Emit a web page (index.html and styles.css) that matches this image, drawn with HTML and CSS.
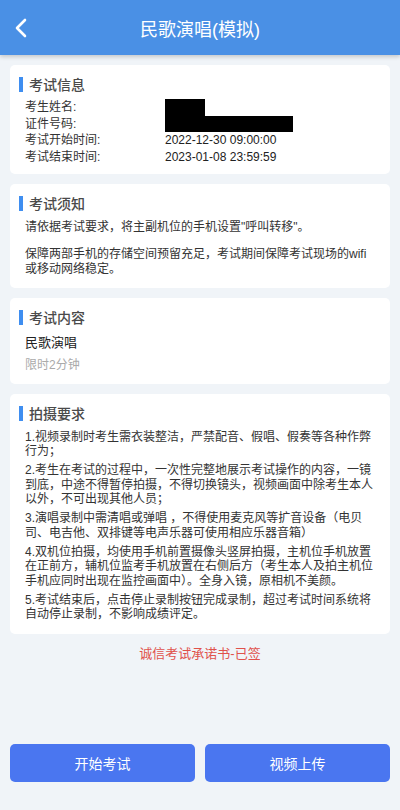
FILE: index.html
```html
<!DOCTYPE html>
<html lang="zh-CN">
<head>
    <meta charset="UTF-8">
    <meta name="viewport" content="width=device-width, initial-scale=1.0">
    <title>民歌演唱(模拟)</title>
    <link rel="stylesheet" href="styles.css">
</head>
<body>
    <header class="topbar">
        <a class="back" href="#">
            <svg width="14" height="20" viewBox="0 0 14 20">
                <path d="M11 2 L3 10 L11 18" fill="none" stroke="#fff" stroke-width="2.6" stroke-linecap="round" stroke-linejoin="round"/>
            </svg>
        </a>
        <h1>民歌演唱(模拟)</h1>
        <span></span>
    </header>

    <main class="content">
        <section class="card">
            <h2 class="card-title">考试信息</h2>
            <div class="info-row">
                <span class="label">考生姓名:</span>
                <span class="value"><span class="mask mask-name"></span></span>
            </div>
            <div class="info-row">
                <span class="label">证件号码:</span>
                <span class="value"><span class="mask mask-id"></span></span>
            </div>
            <div class="info-row">
                <span class="label">考试开始时间:</span>
                <span class="value">2022-12-30 09:00:00</span>
            </div>
            <div class="info-row">
                <span class="label">考试结束时间:</span>
                <span class="value">2023-01-08 23:59:59</span>
            </div>
        </section>

        <section class="card">
            <h2 class="card-title">考试须知</h2>
            <p class="notice">请依据考试要求，将主副机位的手机设置"呼叫转移"。</p>
            <p class="notice">保障两部手机的存储空间预留充足，考试期间保障考试现场的wifi或移动网络稳定。</p>
        </section>

        <section class="card">
            <h2 class="card-title">考试内容</h2>
            <div class="subject">民歌演唱</div>
            <div class="time-limit">限时2分钟</div>
        </section>

        <section class="card">
            <h2 class="card-title">拍摄要求</h2>
            <p class="rule">1.视频录制时考生需衣装整洁，严禁配音、假唱、假奏等各种作弊行为；</p>
            <p class="rule">2.考生在考试的过程中，一次性完整地展示考试操作的内容，一镜到底，中途不得暂停拍摄，不得切换镜头，视频画面中除考生本人以外，不可出现其他人员；</p>
            <p class="rule">3.演唱录制中需清唱或弹唱 ，不得使用麦克风等扩音设备（电贝司、电吉他、双排键等电声乐器可使用相应乐器音箱）</p>
            <p class="rule">4.双机位拍摄，均使用手机前置摄像头竖屏拍摄，主机位手机放置在正前方，辅机位监考手机放置在右侧后方（考生本人及拍主机位手机应同时出现在监控画面中）。全身入镜，原相机不美颜。</p>
            <p class="rule">5.考试结束后，点击停止录制按钮完成录制，超过考试时间系统将自动停止录制，不影响成绩评定。</p>
        </section>

        <div class="promise">诚信考试承诺书-已签</div>
    </main>

    <footer class="actions">
        <button class="btn">开始考试</button>
        <button class="btn">视频上传</button>
    </footer>
</body>
</html>
```

FILE: styles.css
```css
* {
    box-sizing: border-box;
    margin: 0;
    padding: 0;
}

body {
    background-color: #f0f4f8;
    color: #333;
    font-family: 'Liberation Sans', 'Noto Sans CJK SC', sans-serif;
    font-size: 12px;
    min-height: 100vh;
    display: flex;
    flex-direction: column;
}

.topbar {
    height: 55px;
    background-color: #4a90e5;
    box-shadow: 0 2px 4px rgba(0, 0, 0, 0.18);
    display: grid;
    grid-template-columns: 40px 1fr 40px;
    align-items: center;
    color: #fff;
}

.back {
    display: flex;
    align-items: center;
    justify-content: center;
    height: 100%;
    padding-left: 2px;
}

.topbar h1 {
    font-size: 18px;
    font-weight: normal;
    text-align: center;
}

.content {
    flex: 1;
    padding: 10px;
    display: flex;
    flex-direction: column;
    gap: 10px;
}

.card {
    background-color: #fff;
    border-radius: 5px;
    padding: 10px 15px 8px;
}

.card-title {
    position: relative;
    font-size: 14px;
    font-weight: 500;
    color: #4a4a4a;
    line-height: 20px;
    padding-left: 4px;
    margin-bottom: 4px;
}

.card-title::before {
    content: '';
    position: absolute;
    left: -6px;
    top: 2px;
    width: 4px;
    height: 15px;
    background-color: #3f8ef0;
}

.info-row {
    display: grid;
    grid-template-columns: 140px 1fr;
    line-height: 16.7px;
    color: #333;
}

.value {
    color: #222;
}

.mask {
    display: inline-block;
    vertical-align: top;
    height: 16.5px;
    background-color: #000;
}

.mask-name {
    width: 40px;
}

.mask-id {
    width: 128px;
}

/* margins collapse with the title's margin-bottom */
.notice {
    line-height: 15px;
    margin-top: 6.5px;
}

.notice + .notice {
    margin-top: 12px;
}

.card:nth-child(2) {
    padding-bottom: 11px;
}

.subject {
    font-size: 13px;
    line-height: 20px;
    color: #222;
    margin-top: 5px;
}

.time-limit {
    line-height: 20px;
    color: #aaa;
    margin-top: 2px;
}

.card:nth-child(3) {
    padding-bottom: 9px;
}

.rule {
    line-height: 14.4px;
    margin-top: 4.7px;
}

.card-title + .rule {
    margin-top: 5.5px;
}

.card:nth-child(4) {
    padding-bottom: 13px;
}

.promise {
    text-align: center;
    color: #e0514b;
    font-size: 13px;
    line-height: 20px;
}

.actions {
    display: flex;
    gap: 10px;
    padding: 0 10px 28px;
}

.btn {
    flex: 1;
    height: 38px;
    border: none;
    border-radius: 5px;
    background-color: #4a76f0;
    color: #fff;
    font-family: inherit;
    font-size: 14px;
}
```
